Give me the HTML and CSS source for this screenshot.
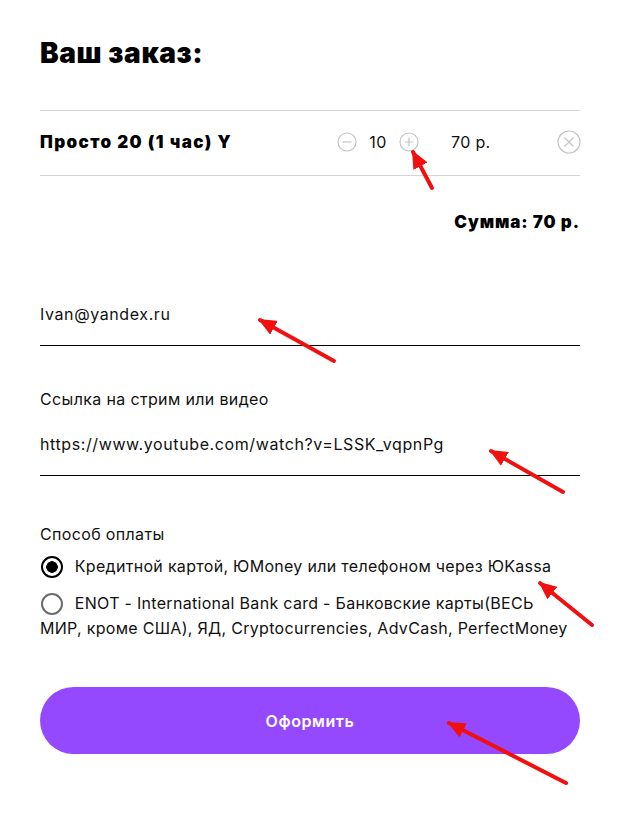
FILE: index.html
```html
<!DOCTYPE html>
<html lang="ru">
<head>
  <meta charset="UTF-8">
  <meta name="viewport" content="width=device-width, initial-scale=1">
  <title>Ваш заказ</title>
  <link rel="stylesheet" href="styles.css">
</head>
<body>
  <div class="checkout">
    <h1>Ваш заказ:</h1>

    <div class="cart-item">
      <div class="item-name">Просто 20 (1 час) Y</div>
      <div class="qty">
        <button class="icon-btn" aria-label="Меньше">
          <svg width="20" height="20" viewBox="0 0 20 20"><circle cx="10" cy="10" r="9" fill="none" stroke="#c4c4c4" stroke-width="1.2"/><path d="M5.5 10h9" stroke="#c4c4c4" stroke-width="1.2"/></svg>
        </button>
        <span class="qty-value">10</span>
        <button class="icon-btn" aria-label="Больше">
          <svg width="20" height="20" viewBox="0 0 20 20"><circle cx="10" cy="10" r="9" fill="none" stroke="#c4c4c4" stroke-width="1.2"/><path d="M5.5 10h9M10 5.5v9" stroke="#c4c4c4" stroke-width="1.2"/></svg>
        </button>
      </div>
      <div class="item-price">70 р.</div>
      <button class="icon-btn remove" aria-label="Удалить">
        <svg width="24" height="24" viewBox="0 0 24 24"><circle cx="12" cy="12" r="11" fill="none" stroke="#c4c4c4" stroke-width="1.2"/><path d="M7.5 7.5l9 9M16.5 7.5l-9 9" stroke="#c4c4c4" stroke-width="1.2"/></svg>
      </button>
    </div>

    <div class="total">Сумма: 70 р.</div>

    <input class="field email" type="email" value="Ivan@yandex.ru">

    <label class="field-label" for="link">Ссылка на стрим или видео</label>
    <input class="field link" id="link" type="text" value="https://www.youtube.com/watch?v=LSSK_vqpnPg">

    <div class="pay-title">Способ оплаты</div>
    <label class="pay-option">
      <input type="radio" name="pay" checked>
      Кредитной картой, ЮMoney или телефоном через ЮKassa
    </label>
    <label class="pay-option">
      <input type="radio" name="pay">
      ENOT - International Bank card - Банковские карты(ВЕСЬ МИР, кроме США), ЯД, Cryptocurrencies, AdvCash, PerfectMoney
    </label>

    <button class="submit">Оформить</button>
  </div>

  <svg class="marks" width="623" height="813" viewBox="0 0 623 813">
    <defs>
      <marker id="head" markerUnits="userSpaceOnUse" markerWidth="18" markerHeight="16" refX="16" refY="8" orient="auto">
        <path d="M0 0L18 8L0 16z" fill="#f01010"/>
      </marker>
    </defs>
    <g stroke="#f01010" stroke-width="4" stroke-linecap="round" marker-end="url(#head)">
      <line x1="432" y1="188" x2="413" y2="152"/>
      <line x1="334" y1="361" x2="260" y2="320"/>
      <line x1="563" y1="492" x2="491" y2="451"/>
      <line x1="592" y1="625" x2="540" y2="583"/>
      <line x1="566" y1="783" x2="449" y2="723"/>
    </g>
  </svg>
</body>
</html>
```

FILE: styles.css
```css
body {
  margin: 0;
  font-family: Inter, "Noto Sans", sans-serif;
  color: #111;
  background: #fff;
}
.checkout {
  width: 540px;
  padding: 0 43px 40px 40px;
}
h1 {
  margin: 36px 0 40px;
  font-size: 28px;
  line-height: 34px;
  font-weight: 900;
  letter-spacing: 0.6px;
  color: #000;
}
.cart-item {
  display: flex;
  align-items: center;
  height: 62px;
  padding-bottom: 2px;
  border-top: 1px solid #d4d4d4;
  border-bottom: 1px solid #d4d4d4;
  font-size: 16px;
  letter-spacing: 0.35px;
}
.item-name {
  flex: 0 0 297px;
  font-size: 17px;
  font-weight: 900;
  letter-spacing: 1.4px;
  color: #000;
}
.qty {
  display: flex;
  align-items: center;
  gap: 11px;
}
.qty-value {
  width: 20px;
  text-align: center;
}
.icon-btn {
  display: flex;
  padding: 0;
  border: none;
  background: none;
  cursor: pointer;
}
.item-price {
  margin-left: 32px;
}
.remove {
  margin-left: auto;
  margin-right: -1px;
}
.total {
  margin-top: 36px;
  text-align: right;
  font-size: 17px;
  line-height: 20px;
  font-weight: 900;
  letter-spacing: 0.9px;
  color: #000;
}
.field {
  display: block;
  box-sizing: content-box;
  width: 100%;
  padding: 0 0 21px;
  border: none;
  border-bottom: 1px solid #000;
  outline: none;
  font-family: inherit;
  font-size: 16px;
  line-height: 20px;
  height: 20px;
  letter-spacing: 0.6px;
  color: #111;
  background: none;
}
.email {
  margin-top: 72px;
}
.field-label {
  display: block;
  margin-top: 43px;
  font-size: 16px;
  line-height: 20px;
  letter-spacing: 0.35px;
}
.link {
  margin-top: 25px;
}
.pay-title {
  margin-top: 48px;
  font-size: 16px;
  line-height: 20px;
  letter-spacing: 0.35px;
}
.pay-option {
  display: block;
  margin-top: 10px;
  font-size: 16px;
  line-height: 25px;
  letter-spacing: 0.3px;
  cursor: pointer;
}
.pay-option + .pay-option {
  margin-top: 12px;
}
.pay-option input {
  appearance: none;
  width: 22px;
  height: 22px;
  margin: 0 7px 0 1px;
  vertical-align: -6px;
  border: 2px solid #6b6b6b;
  border-radius: 50%;
  box-sizing: border-box;
}
.pay-option input:checked {
  border-color: #000;
  background: radial-gradient(circle, #000 0 5.5px, #fff 6px);
}
.submit {
  display: block;
  width: 100%;
  height: 67px;
  margin-top: 46px;
  border: none;
  border-radius: 34px;
  background: #9549ff;
  color: #fff;
  font-family: inherit;
  font-size: 16px;
  font-weight: 600;
  letter-spacing: 0.6px;
  cursor: pointer;
}
.marks {
  position: absolute;
  top: 0;
  left: 0;
  pointer-events: none;
}
```
